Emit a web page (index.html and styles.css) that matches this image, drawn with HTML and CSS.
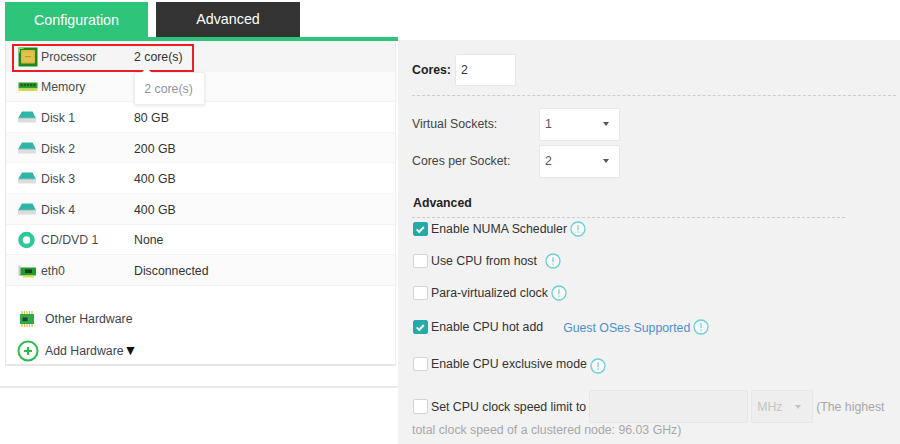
FILE: index.html
```html
<!DOCTYPE html>
<html lang="en">
<head>
<meta charset="utf-8">
<title>CPU configuration</title>
<link rel="stylesheet" href="styles.css">
</head>
<body>
<div class="page">
  <section class="left">
    <nav class="tabs">
      <div class="tab tab-on">Configuration</div>
      <div class="tab tab-off">Advanced</div>
    </nav>
    <div class="panel">
      <div class="row row-on">
        <svg class="ico" viewBox="0 0 20 20"><rect x="0.500" y="0.500" width="19" height="19" fill="#1e8a1e"/><path d="M.5.500h5v1.500H2v3.500H.5z" fill="#8fd46a"/><rect x="3" y="3" width="14" height="13.500" rx="1" fill="#dcb83e"/><rect x="4.500" y="5" width="11" height="9.500" fill="#e3c24e"/><rect x="7" y="9" width="6" height="1.200" fill="#b8983a"/></svg>
        <span class="name">Processor</span><span class="val">2 core(s)</span>
      </div>
      <div class="row">
        <svg class="ico" viewBox="0 0 20 20"><rect x="0.500" y="5.500" width="19" height="6" fill="#2f9e2f"/><rect x="0.500" y="11.500" width="19" height="2.500" fill="#d4d84a"/><path d="M2.500 8h15" stroke="#1c5a1c" stroke-width="2.500" stroke-dasharray="2.200 1"/></svg>
        <span class="name">Memory</span><span class="val"></span>
      </div>
      <div class="row">
        <svg class="ico" viewBox="0 0 20 20"><use href="#disk"/></svg>
        <span class="name">Disk 1</span><span class="val">80 GB</span>
      </div>
      <div class="row">
        <svg class="ico" viewBox="0 0 20 20"><use href="#disk"/></svg>
        <span class="name">Disk 2</span><span class="val">200 GB</span>
      </div>
      <div class="row">
        <svg class="ico" viewBox="0 0 20 20"><use href="#disk"/></svg>
        <span class="name">Disk 3</span><span class="val">400 GB</span>
      </div>
      <div class="row">
        <svg class="ico" viewBox="0 0 20 20"><use href="#disk"/></svg>
        <span class="name">Disk 4</span><span class="val">400 GB</span>
      </div>
      <div class="row">
        <svg class="ico" viewBox="0 0 20 20"><circle cx="8.500" cy="10" r="6" fill="#fff" stroke="#2cc79a" stroke-width="4.500"/></svg>
        <span class="name">CD/DVD 1</span><span class="val">None</span>
      </div>
      <div class="row">
        <svg class="ico" viewBox="0 0 20 20"><path d="M.5 4l2 1.500V15H.5z" fill="#c9c9c9"/><rect x="2.500" y="6.500" width="15.500" height="8" fill="#1f9c2a"/><rect x="7" y="8.500" width="7" height="3.500" fill="#1d3a24"/><rect x="5" y="14.500" width="11" height="2" fill="#dbe04a"/></svg>
        <span class="name">eth0</span><span class="val">Disconnected</span>
      </div>
      <div class="extras">
        <div class="extra">
          <svg class="ico ico-chip" viewBox="0 0 16 18"><path d="M3 1v16M5.500 1v16M8 1v16M10.500 1v16M13 1v16" stroke="#d9c53a" stroke-width="1.200"/><rect x="1" y="4" width="14" height="10" fill="#2fa84a"/><rect x="3.500" y="7.500" width="5" height="3.500" fill="#2b3b33"/></svg>
          <span>Other Hardware</span>
        </div>
        <div class="extra">
          <svg class="ico ico-add" viewBox="0 0 22 22"><circle cx="11" cy="11" r="9.500" fill="#fff" stroke="#2dbb4e" stroke-width="2"/><path d="M7 11h8M11 7v8" stroke="#2dbb4e" stroke-width="2"/></svg>
          <span>Add Hardware<b class="caret">▼</b></span>
        </div>
      </div>
    </div>
    <div class="rule"></div>
    <div class="mark"></div>
    <div class="tip">2 core(s)</div>
  </section>

  <section class="right">
    <div class="cores">
      <strong class="cores-label">Cores:</strong>
      <div class="field field-cores">2</div>
    </div>
    <div class="sockets">
      <div class="pair"><span class="pair-label">Virtual Sockets:</span><div class="field field-sel"><span>1</span><i class="arrow"></i></div></div>
      <div class="pair"><span class="pair-label">Cores per Socket:</span><div class="field field-sel"><span>2</span><i class="arrow"></i></div></div>
    </div>
    <h2 class="adv">Advanced</h2>
    <div class="opts">
      <div class="opt"><span class="cb cb-on"><svg viewBox="0 0 14 14"><path d="M3 7.200l2.800 2.800L11 4.500" fill="none" stroke="#fff" stroke-width="2.200"/></svg></span><span>Enable NUMA Scheduler</span><svg class="info" viewBox="0 0 16 16"><use href="#info"/></svg></div>
      <div class="opt"><span class="cb"></span><span>Use CPU from host</span><svg class="info info-far" viewBox="0 0 16 16"><use href="#info"/></svg></div>
      <div class="opt"><span class="cb"></span><span>Para-virtualized clock</span><svg class="info" viewBox="0 0 16 16"><use href="#info"/></svg></div>
      <div class="opt opt-hot"><span class="cb cb-on"><svg viewBox="0 0 14 14"><path d="M3 7.200l2.800 2.800L11 4.500" fill="none" stroke="#fff" stroke-width="2.200"/></svg></span><span>Enable CPU hot add</span><a class="link">Guest OSes Supported</a><svg class="info" viewBox="0 0 16 16"><use href="#info"/></svg></div>
      <div class="opt opt-excl"><span class="cb"></span><span>Enable CPU exclusive mode</span><svg class="info info-low" viewBox="0 0 16 16"><use href="#info"/></svg></div>
    </div>
    <div class="limit">
      <div class="limit-row">
        <span class="cb"></span><span class="limit-label">Set CPU clock speed limit to</span>
        <div class="off off-input"></div>
        <div class="off off-sel"><span>MHz</span><i class="arrow arrow-off"></i></div>
        <span class="muted">(The highest</span>
      </div>
      <div class="muted limit-more">total clock speed of a clustered node: 96.03 GHz)</div>
    </div>
  </section>
</div>
<svg class="defs" aria-hidden="true">
  <symbol id="disk" viewBox="0 0 20 20"><path d="M4 3.500h10.500l3 6H.5z" fill="#2db5a8"/><path d="M.5 9.500h17l.5 1H0z" fill="#1f8f88"/><rect x="0" y="10.500" width="18" height="4" fill="#dcdedc"/></symbol>
  <symbol id="info" viewBox="0 0 16 16"><circle cx="8" cy="8" r="7" fill="#fff" fill-opacity=".5" stroke="#68d0d4" stroke-width="1.300"/><path d="M8 4.200v5" stroke="#68d0d4" stroke-width="1.200"/><path d="M8 10.500v1.300" stroke="#68d0d4" stroke-width="1.200"/></symbol>
</svg>
</body>
</html>
```
FILE: styles.css
```css
* { box-sizing: border-box; }
html, body { margin: 0; padding: 0; }
body {
  width: 900px;
  height: 444px;
  overflow: hidden;
  background: #fff;
  font-family: "Liberation Sans", Arial, sans-serif;
  font-size: 12.3px;
  color: #333;
}
.defs { width: 0; height: 0; display: block; }
.page { display: flex; height: 444px; }

.left { position: relative; width: 398px; padding-top: 2px; flex: none; }
.tabs {
  display: flex;
  gap: 8px;
  margin-left: 5px;
  height: 39px;
  border-bottom: 4px solid #2ec47a;
}
.tab {
  height: 35px;
  display: flex;
  align-items: center;
  justify-content: center;
  font-size: 14.3px;
  color: #fff;
}
.tab-on { width: 143px; background: #2ec47a; }
.tab-off { width: 144px; background: #333; height: 34.500px; }

.panel {
  margin-left: 5px;
  width: 391px;
  height: 325px;
  border-left: 1px solid #e6e6e6;
  border-bottom: 2px solid #e6e6e6;
  border-right: 1px solid #eee;
}
.row {
  display: flex;
  align-items: center;
  height: 30.600px;
  padding: 2px 0 0 12px;
  background: #fff;
  border-bottom: 1px solid #f4f4f4;
}
.row:nth-child(even) { background: #fbfbfb; }
.row-on { background: #f5f5f5; }
.ico { width: 20px; height: 20px; flex: none; margin-right: 3px; }
.name { width: 93px; color: #4a4a4a; }
.val { color: #333; }

.extras { padding: 17px 0 0 12px; }
.extra { display: flex; align-items: center; height: 32px; color: #3d4450; }
.ico-chip { width: 16px; height: 18px; margin: 0 10px 0 1px; }
.ico-add { width: 22px; height: 22px; margin: 0 6px 0 -1px; }
.caret { font-weight: normal; color: #111; font-size: 14px; line-height: 1; }

.rule { height: 2px; margin-top: 20px; background: #eaeaea; }

.mark {
  position: absolute;
  left: 12px;
  top: 44px;
  width: 182px;
  height: 28px;
  border: 2px solid #ee1c25;
}
.tip {
  position: absolute;
  left: 134px;
  top: 72px;
  width: 71px;
  height: 33px;
  padding-right: 2px;
  background: #fff;
  border: 1px solid #eee;
  border-radius: 2px;
  box-shadow: 0 1px 3px rgba(0, 0, 0, .1);
  color: #8f949e;
  display: flex;
  align-items: center;
  justify-content: center;
}
.tip::before {
  content: "";
  position: absolute;
  left: 8px;
  top: -4px;
  width: 7px;
  height: 7px;
  background: #fff;
  transform: rotate(45deg);
}

.right {
  flex: 1;
  margin-top: 40px;
  padding: 14px 4px 0 14px;
  background: #f2f2f2;
}
.cores {
  display: flex;
  align-items: center;
  gap: 4px;
  height: 42px;
  padding-bottom: 9px;
  border-bottom: 1px dashed #ccc;
}
.cores-label { color: #222; }
.field {
  background: #fff;
  border: 1px solid #e8e8e8;
  border-radius: 2px;
  height: 32.500px;
  display: flex;
  align-items: center;
}
.field-cores { width: 61px; padding-left: 5px; }
.sockets { padding-top: 12px; display: flex; flex-direction: column; gap: 4.500px; }
.pair { display: flex; align-items: center; }
.pair-label { width: 127px; color: #444; }
.field-sel { width: 81px; padding: 0 10px 0 5px; justify-content: space-between; color: #555; }
.arrow {
  width: 0;
  height: 0;
  border-left: 3.500px solid transparent;
  border-right: 3.500px solid transparent;
  border-top: 4px solid #555;
}
.arrow-off { border-top-color: #c4c4c4; }

.adv {
  margin: 17.500px 0 0;
  padding: 1px 0 7px 1px;
  width: 433px;
  height: 23px;
  font-size: 12.3px;
  font-weight: bold;
  color: #222;
  border-bottom: 1px dashed #ccc;
}
.opts { display: flex; flex-direction: column; gap: 10px; }
.opt { display: flex; align-items: center; height: 22px; }
.opt-hot { margin-top: 2px; }
.opt-excl { margin-top: 5px; }
.cb {
  flex: none;
  width: 14.500px;
  height: 14.500px;
  margin: 0 3.500px 0 1px;
  background: #fff;
  border: 1px solid #d4d4d4;
  border-radius: 2px;
  display: block;
}
.cb svg { display: block; width: 100%; height: 100%; }
.cb-on { background: #26a9a9; border-color: #26a9a9; }
.info { flex: none; width: 16px; height: 16px; margin-left: 3px; }
.info-far { margin-left: 8px; }
.info-low { margin-top: 4px; }
.link { margin-left: 20px; color: #4d8fd0; position: relative; top: 1px; }

.limit { margin-top: 15px; }
.limit-row { display: flex; align-items: center; height: 33px; }
.limit-label { margin-right: 3px; }
.off {
  height: 32.500px;
  background: #eee;
  border: 1px solid #e6e6e6;
  border-radius: 2px;
}
.off-input { width: 159px; margin-right: 3px; }
.off-sel {
  width: 62px;
  margin-right: 3px;
  padding: 0 11px 0 5px;
  display: flex;
  align-items: center;
  justify-content: space-between;
  color: #c4c4c4;
}
.muted { color: #a8a8a8; }
.limit-more { margin-top: -1px; line-height: 16px; }
```
